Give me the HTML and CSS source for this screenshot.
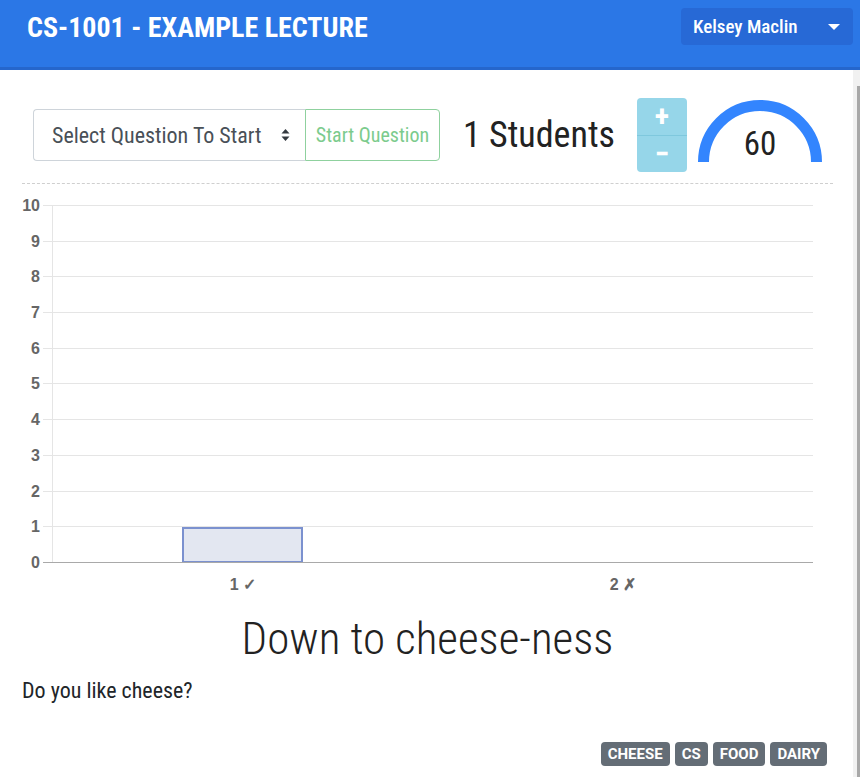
FILE: index.html
```html
<!DOCTYPE html>
<html>
<head>
<meta charset="utf-8">
<link rel="stylesheet" href="styles.css">
</head>
<body>
<header class="topbar">
  <h1 class="title">CS-1001 - EXAMPLE LECTURE</h1>
  <div class="user">
    <span>Kelsey Maclin</span>
    <span class="caret"></span>
  </div>
</header>
<div class="body-wrap">
<main class="content">
  <div class="controls">
    <div class="qgroup">
      <div class="qselect">
        <span>Select Question To Start</span>
        <svg class="sort" width="9" height="14" viewBox="0 0 9 14"><path d="M4.5 1 L8.5 5.5 H0.5 Z M4.5 13 L8.5 8.5 H0.5 Z" fill="#343a40"/></svg>
      </div>
      <div class="startbtn">Start Question</div>
    </div>
    <div class="students">1 Students</div>
    <div class="stepper">
      <div class="step step-up">+</div>
      <div class="step step-down">&minus;</div>
    </div>
    <svg class="gauge" width="124" height="63" viewBox="0 0 124 63">
      <path d="M5.5 63 A56.5 56.5 0 0 1 118.5 63" fill="none" stroke="#3385fe" stroke-width="11"/>
      <text x="62" y="56" text-anchor="middle" class="gauge-num">60</text>
    </svg>
  </div>
  <svg class="chart" width="811" height="420" viewBox="0 0 811 420">
    <g stroke="#e5e5e5" stroke-width="1">
      <line x1="30.5" y1="21" x2="30.5" y2="378"/>
      <line x1="21" y1="21.5" x2="791" y2="21.5"/>
      <line x1="21" y1="57.5" x2="791" y2="57.5"/>
      <line x1="21" y1="92.5" x2="791" y2="92.5"/>
      <line x1="21" y1="128.5" x2="791" y2="128.5"/>
      <line x1="21" y1="164.5" x2="791" y2="164.5"/>
      <line x1="21" y1="199.5" x2="791" y2="199.5"/>
      <line x1="21" y1="235.5" x2="791" y2="235.5"/>
      <line x1="21" y1="271.5" x2="791" y2="271.5"/>
      <line x1="21" y1="307.5" x2="791" y2="307.5"/>
      <line x1="21" y1="342.5" x2="791" y2="342.5"/>
    </g>
    <rect x="161" y="344" width="119" height="34" fill="#e3e7f1" stroke="#7b91cf" stroke-width="2"/>
    <line x1="21" y1="378.5" x2="791" y2="378.5" stroke="#a9a9a9" stroke-width="1"/>
    <g class="ylab" text-anchor="end">
      <text x="18" y="27">10</text>
      <text x="18" y="63">9</text>
      <text x="18" y="98">8</text>
      <text x="18" y="134">7</text>
      <text x="18" y="170">6</text>
      <text x="18" y="205">5</text>
      <text x="18" y="241">4</text>
      <text x="18" y="277">3</text>
      <text x="18" y="313">2</text>
      <text x="18" y="348">1</text>
      <text x="18" y="384">0</text>
    </g>
    <g class="ylab" text-anchor="middle">
      <text x="221" y="406">1 ✓</text>
      <text x="601" y="406">2 ✗</text>
    </g>
  </svg>
  <h2 class="qtitle">Down to cheese-ness</h2>
  <p class="qtext">Do you like cheese?</p>
  <div class="tags">
    <span class="tag">CHEESE</span>
    <span class="tag">CS</span>
    <span class="tag">FOOD</span>
    <span class="tag">DAIRY</span>
  </div>
</main>
<div class="scrollbar"><div class="thumb"></div></div>
</div>
</body>
</html>
```
FILE: styles.css
```css
html, body {
  margin: 0;
  padding: 0;
  height: 100%;
  overflow: hidden;
}
body {
  font-family: "Roboto Condensed", Roboto, "Liberation Sans", sans-serif;
  font-stretch: condensed;
  color: #212529;
  background: #fff;
  display: flex;
  flex-direction: column;
}
.topbar {
  flex: none;
  height: 67px;
  background: #2b77e6;
  border-bottom: 3px solid #2566cc;
  display: flex;
  justify-content: space-between;
  align-items: flex-start;
  padding: 0 7px 0 27px;
}
.title {
  margin: 11px 0 0;
  font-size: 28px;
  line-height: 33px;
  font-weight: 700;
  color: #fff;
}
.user {
  margin-top: 8px;
  width: 172px;
  height: 37px;
  box-sizing: border-box;
  background: #2769d6;
  border-radius: 4px;
  display: flex;
  align-items: center;
  justify-content: space-between;
  padding: 0 13px 0 12px;
  color: #fff;
  font-size: 19px;
  font-weight: 500;
}
.caret {
  width: 0;
  height: 0;
  border-left: 6px solid transparent;
  border-right: 6px solid transparent;
  border-top: 6px solid #fff;
}
.body-wrap {
  flex: 1;
  display: flex;
  min-height: 0;
}
.content {
  flex: 1;
  overflow: hidden;
  box-sizing: border-box;
  padding: 0 20px 0 22px;
}
.scrollbar {
  flex: none;
  width: 7px;
  background: #f1f1f1;
  padding-top: 16px;
  box-sizing: border-box;
}
.thumb {
  margin-left: 4px;
  height: 100%;
  background: #a8a8a8;
}
.controls {
  display: flex;
  align-items: center;
  padding: 28px 0 11px 11px;
  border-bottom: 1px dashed #cfcfcf;
}
.qgroup {
  display: flex;
  height: 52px;
}
.qselect {
  width: 272px;
  box-sizing: border-box;
  border: 1px solid #ced4da;
  border-right: none;
  border-radius: 4px 0 0 4px;
  display: flex;
  align-items: center;
  justify-content: space-between;
  padding: 0 15px 0 18px;
  font-size: 22px;
  color: #495057;
}
.startbtn {
  width: 135px;
  box-sizing: border-box;
  border: 1px solid #8fd19e;
  border-radius: 0 4px 4px 0;
  display: flex;
  align-items: center;
  justify-content: center;
  font-size: 20px;
  color: #7ccb8d;
}
.students {
  margin-left: 23px;
  font-size: 36px;
  color: #222;
}
.stepper {
  margin-left: 22px;
  width: 50px;
  height: 74px;
  display: flex;
  flex-direction: column;
  border-radius: 4px;
  overflow: hidden;
  background: #96d6e9;
}
.step {
  flex: 1;
  display: flex;
  align-items: center;
  justify-content: center;
  color: #fff;
  font-size: 30px;
  font-weight: 700;
  line-height: 1;
}
.step-up {
  border-bottom: 1px solid #7fc8dd;
}
.gauge {
  margin-left: 11px;
  align-self: flex-start;
  margin-top: 1px;
}
.gauge-num {
  font-family: "Roboto Condensed", Roboto, sans-serif;
  font-stretch: condensed;
  font-size: 33px;
  fill: #222;
}
.chart {
  display: block;
}
.ylab {
  font-family: "Liberation Sans", Arial, sans-serif;
  font-size: 16px;
  font-weight: 700;
  fill: #666;
}
.qtitle {
  margin: 10px 0 0;
  text-align: center;
  font-size: 45px;
  font-weight: 300;
  line-height: 50px;
  color: #222;
}
.qtext {
  margin: 14px 0 0;
  font-size: 22px;
  line-height: 26px;
  color: #212529;
}
.tags {
  margin-top: 38px;
  padding-right: 6px;
  display: flex;
  justify-content: flex-end;
  gap: 5px;
}
.tag {
  background: #646d76;
  color: #fff;
  font-family: Roboto, "Liberation Sans", sans-serif;
  font-stretch: normal;
  font-size: 15px;
  font-weight: 700;
  line-height: 24px;
  padding: 0 7px;
  border-radius: 4px;
}
```
